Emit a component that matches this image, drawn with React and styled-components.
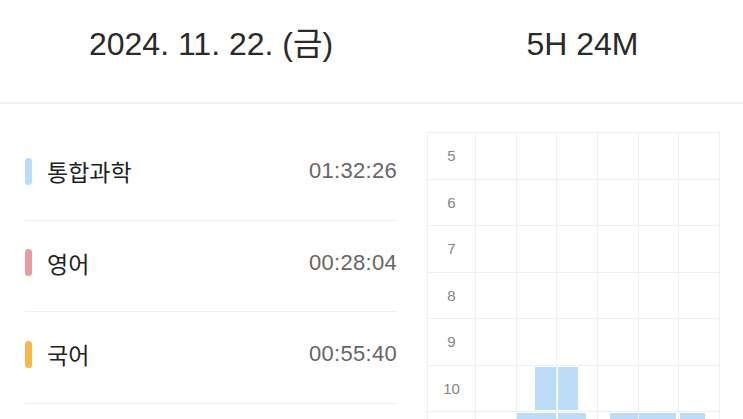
import React from 'react';
import styled, { createGlobalStyle } from 'styled-components';

const GlobalStyle = createGlobalStyle`
  html, body {
    margin: 0;
    padding: 0;
    background: #ffffff;
    overflow: hidden;
  }
  body {
    font-family: "Liberation Sans", "Noto Sans CJK KR", sans-serif;
  }
`;

const subjects = [
  { name: '통합과학', time: '01:32:26', color: '#b9dcf8' },
  { name: '영어', time: '00:28:04', color: '#eb9a9d' },
  { name: '국어', time: '00:55:40', color: '#fab54b' },
];

const hours = [5, 6, 7, 8, 9, 10, 11];

// bars per hour: [column, start %, end %]
const blocks = {
  10: [
    [1, 47, 100],
    [2, 2, 53],
  ],
  11: [
    [1, 2, 100],
    [2, 2, 73],
    [3, 30, 100],
    [4, 2, 95],
    [5, 2, 65],
  ],
};

export default function App() {
  return (
    <>
      <GlobalStyle />
      <Page>
        <Header>
          <HeaderCell $width="422px">2024. 11. 22. (금)</HeaderCell>
          <HeaderCell>5H 24M</HeaderCell>
        </Header>
        <Main>
          <List>
            {subjects.map((s) => (
              <Row key={s.name}>
                <ColorMark $color={s.color} />
                <Name>{s.name}</Name>
                <Time>{s.time}</Time>
              </Row>
            ))}
          </List>
          <ChartPanel>
            <Grid>
              {hours.map((h) => (
                <React.Fragment key={h}>
                  <HourLabel>{h}</HourLabel>
                  {[0, 1, 2, 3, 4, 5].map((c) => (
                    <Cell key={c}>
                      {(blocks[h] || [])
                        .filter((b) => b[0] === c)
                        .map((b, i) => (
                          <Block
                            key={i}
                            style={{ left: `${b[1]}%`, right: `${100 - b[2]}%` }}
                          />
                        ))}
                    </Cell>
                  ))}
                </React.Fragment>
              ))}
            </Grid>
          </ChartPanel>
        </Main>
      </Page>
    </>
  );
}

const Page = styled.div`
  width: 743px;
  height: 419px;
  overflow: hidden;
  display: flex;
  flex-direction: column;
`;

const Header = styled.div`
  height: 87px;
  padding-bottom: 15px;
  border-bottom: 2px solid #f1f1f1;
  display: flex;
  align-items: center;
  flex-shrink: 0;
`;

const HeaderCell = styled.div`
  width: ${(p) => p.$width || 'auto'};
  flex: ${(p) => (p.$width ? 'none' : '1')};
  text-align: center;
  font-size: 32px;
  line-height: 32px;
  color: #2a2a2a;
`;

const Main = styled.div`
  display: flex;
  flex: 1;
  min-height: 0;
`;

const List = styled.div`
  width: 422px;
  box-sizing: border-box;
  padding: 25px 25px 0 25px;
  display: flex;
  flex-direction: column;
`;

const Row = styled.div`
  height: 91.5px;
  flex-shrink: 0;
  box-sizing: border-box;
  border-bottom: 1px solid #f0f0f0;
  padding-bottom: 6px;
  display: flex;
  align-items: center;
`;

const ColorMark = styled.span`
  width: 7px;
  height: 27px;
  border-radius: 4px;
  background: ${(p) => p.$color};
  margin-right: 15px;
`;

const Name = styled.span`
  flex: 1;
  font-family: "Noto Sans CJK KR", sans-serif;
  font-size: 23px;
  color: #222222;
`;

const Time = styled.span`
  font-size: 22px;
  color: #666666;
  letter-spacing: 0.3px;
`;

const ChartPanel = styled.div`
  flex: 1;
  padding: 28px 0 0 5px;
`;

const Grid = styled.div`
  width: 292px;
  display: grid;
  grid-template-columns: 48px repeat(6, 1fr);
  grid-auto-rows: 46.5px;
  border-top: 1.5px solid #eff0f2;
  border-left: 1.5px solid #eff0f2;
`;

const HourLabel = styled.div`
  display: flex;
  align-items: center;
  justify-content: center;
  font-size: 15px;
  color: #858585;
  border-right: 1.5px solid #eff0f2;
  border-bottom: 1.5px solid #eff0f2;
`;

const Cell = styled.div`
  position: relative;
  border-right: 1.5px solid #eff0f2;
  border-bottom: 1.5px solid #eff0f2;
`;

const Block = styled.div`
  position: absolute;
  top: 1px;
  bottom: 1px;
  background: #bcdcf7;
`;
